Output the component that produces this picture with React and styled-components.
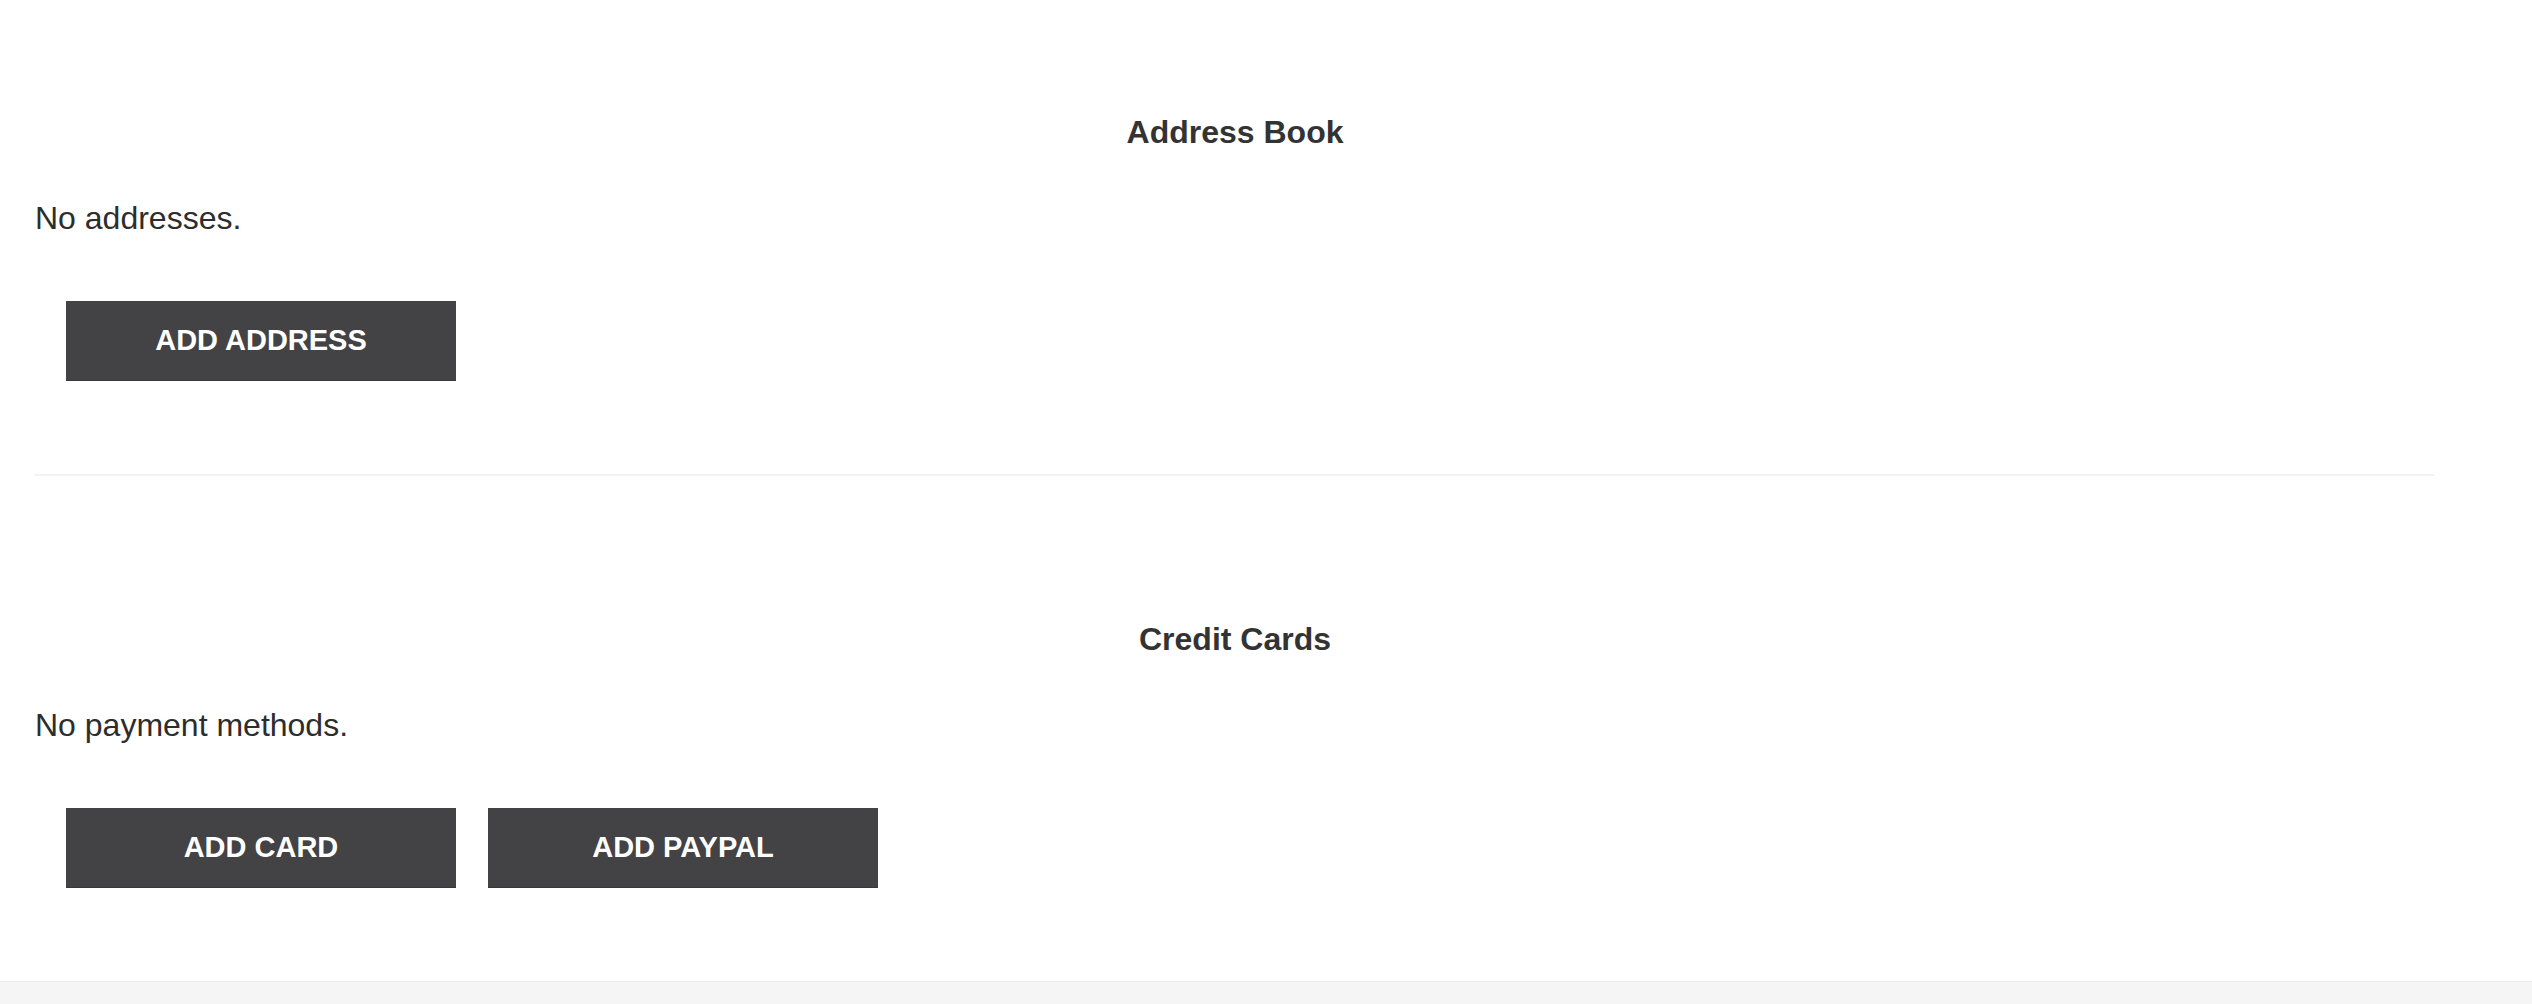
import React from 'react';
import styled, { createGlobalStyle } from 'styled-components';

const GlobalStyle = createGlobalStyle`
  html, body {
    margin: 0;
    padding: 0;
    background: #fff;
  }
  body {
    font-family: "Liberation Sans", Arial, Helvetica, sans-serif;
    color: #333;
  }
`;

const PageDiv = styled.div`
  min-height: 1004px;
  display: flex;
  flex-direction: column;
`;

const ContentDiv = styled.div`
  width: 2400px;
  margin-left: 35px;
`;

const SectionDiv = styled.section`
  padding: ${(props) => (props.first ? '112px' : '143px')} 0 93px 0;
  display: flex;
  flex-direction: column;
`;

const SectionTitle = styled.h2`
  margin: 0;
  font-size: 32px;
  line-height: 40px;
  font-weight: 700;
  text-align: center;
  color: #333;
`;

const EmptyText = styled.p`
  margin: 46px 0 0 0;
  font-size: 32px;
  line-height: 40px;
  color: #2d2d2d;
`;

const ButtonsDiv = styled.div`
  display: flex;
  gap: 32px;
  margin: 63px 0 0 31px;
`;

const ActionButton = styled.button`
  width: 390px;
  height: 80px;
  display: flex;
  align-items: center;
  justify-content: center;
  background: #434245;
  color: #fff;
  border: none;
  border-bottom: 1px solid #38373a;
  border-radius: 0;
  font-family: "Liberation Sans", Arial, Helvetica, sans-serif;
  font-size: 29px;
  font-weight: 700;
  text-transform: uppercase;
  cursor: pointer;
  padding: 0;
`;

const Divider = styled.hr`
  margin: 0;
  border: none;
  border-top: 2px solid #f3f3f3;
`;

const FooterDiv = styled.footer`
  flex: 1;
  min-height: 22px;
  background: #f5f5f5;
  border-top: 1px solid #ececec;
`;

const App = () => (
  <PageDiv>
    <GlobalStyle />
    <ContentDiv>
      <SectionDiv first>
        <SectionTitle>Address Book</SectionTitle>
        <EmptyText>No addresses.</EmptyText>
        <ButtonsDiv>
          <ActionButton>Add Address</ActionButton>
        </ButtonsDiv>
      </SectionDiv>
      <Divider />
      <SectionDiv>
        <SectionTitle>Credit Cards</SectionTitle>
        <EmptyText>No payment methods.</EmptyText>
        <ButtonsDiv>
          <ActionButton>Add Card</ActionButton>
          <ActionButton>Add PayPal</ActionButton>
        </ButtonsDiv>
      </SectionDiv>
    </ContentDiv>
    <FooterDiv />
  </PageDiv>
);

export default App;
